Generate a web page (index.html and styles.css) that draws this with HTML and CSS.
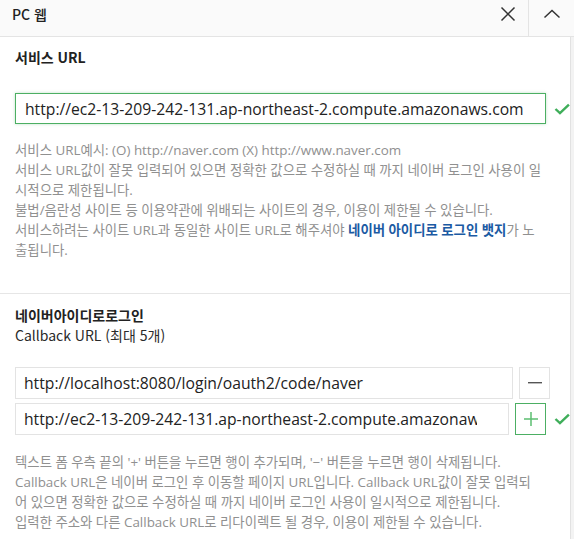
FILE: index.html
```html
<!DOCTYPE html>
<html lang="ko">
<head>
<meta charset="utf-8">
<link rel="stylesheet" href="styles.css">
</head>
<body>
<div class="header">
  <div class="title">PC 웹</div>
  <div class="hbtn close">
    <svg width="16" height="16" viewBox="0 0 16 16"><path d="M1.5 1.5 L14.5 14.5 M14.5 1.5 L1.5 14.5" stroke="#333" stroke-width="1.5" fill="none"/></svg>
  </div>
  <div class="hbtn fold">
    <svg width="18" height="10" viewBox="0 0 18 10"><path d="M1.5 8.5 L9 1.5 L16.5 8.5" stroke="#333" stroke-width="1.5" fill="none"/></svg>
  </div>
</div>
<div class="main">
  <div class="content">
    <section class="sec sec1">
      <h3 class="sec-title">서비스 URL</h3>
      <div class="row first">
        <input class="field active wide" type="text" readonly value="http://ec2-13-209-242-131.ap-northeast-2.compute.amazonaws.com">
        <svg class="check" width="16" height="12" viewBox="0 0 16 12"><path d="M1.5 6 L6 10.2 L15 1.5" stroke="#3fae5a" stroke-width="2.4" fill="none"/></svg>
      </div>
      <p class="help">서비스 URL예시: (O) http://naver.com (X) http://www.naver.com<br>서비스 URL값이 잘못 입력되어 있으면 정확한 값으로 수정하실 때 까지 네이버 로그인 사용이 일시적으로 제한됩니다.<br>불법/음란성 사이트 등 이용약관에 위배되는 사이트의 경우, 이용이 제한될 수 있습니다.<br>서비스하려는 사이트 URL과 동일한 사이트 URL로 해주셔야 <b class="link">네이버 아이디로 로그인 뱃지</b>가 노출됩니다.</p>
    </section>
    <section class="sec sec2">
      <h3 class="sec-title two"><span class="strong">네이버아이디로로그인</span><br>Callback URL (최대 5개)</h3>
      <div class="rows">
        <div class="row">
          <input class="field" type="text" readonly value="http://localhost:8080/login/oauth2/code/naver">
          <div class="btn">
            <svg width="14" height="2" viewBox="0 0 14 2"><rect width="14" height="1.4" fill="#555"/></svg>
          </div>
        </div>
        <div class="row">
          <input class="field" type="text" readonly value="http://ec2-13-209-242-131.ap-northeast-2.compute.amazonaws.com">
          <div class="btn green">
            <svg width="14" height="14" viewBox="0 0 14 14"><path d="M7 0 V14 M0 7 H14" stroke="#5cbf72" stroke-width="1.5"/></svg>
          </div>
          <svg class="check" width="16" height="12" viewBox="0 0 16 12"><path d="M1.5 6 L6 10.2 L15 1.5" stroke="#3fae5a" stroke-width="2.4" fill="none"/></svg>
        </div>
      </div>
      <p class="help h2">텍스트 폼 우측 끝의 '+' 버튼을 누르면 행이 추가되며, '−' 버튼을 누르면 행이 삭제됩니다.<br>Callback URL은 네이버 로그인 후 이동할 페이지 URL입니다. Callback URL값이 잘못 입력되어 있으면 정확한 값으로 수정하실 때 까지 네이버 로그인 사용이 일시적으로 제한됩니다.<br>입력한 주소와 다른 Callback URL로 리다이렉트 될 경우, 이용이 제한될 수 있습니다.</p>
    </section>
  </div>
  <div class="strip"></div>
</div>
</body>
</html>
```
FILE: styles.css
```css
* { box-sizing: border-box; }
html, body { margin: 0; padding: 0; background: #fff; }
body {
  width: 574px;
  height: 539px;
  overflow: hidden;
  font-family: "Noto Sans CJK KR", "Noto Sans", sans-serif;
  color: #222;
}
.header {
  height: 37px;
  background: #fafafa;
  border-bottom: 1px solid #e4e4e4;
  display: flex;
  align-items: stretch;
}
.title {
  flex: 1;
  padding: 4px 0 0 12px;
  font-size: 14px;
  line-height: 20px;
  font-weight: 500;
  color: #222;
}
.hbtn {
  display: flex;
  justify-content: center;
  align-items: flex-start;
}
.close { width: 42px; padding-top: 6px; border-right: 1px solid #e4e4e4; }
.fold { width: 45px; padding-top: 9px; }
.main { display: flex; }
.content { width: 570px; }
.strip { width: 4px; background: #f3f3f3; border-left: 1px solid #e2e2e2; height: 502px; }
.sec { padding-left: 15px; }
.sec1 { padding-top: 10px; border-bottom: 1px solid #e6e6e6; padding-bottom: 33px; }
.sec-title {
  margin: 0;
  font-size: 14px;
  line-height: 20px;
  font-weight: 700;
  color: #222;
}
.row { display: flex; align-items: center; }
.first { margin-top: 26px; }
.field {
  display: block;
  margin: 0;
  width: 498px;
  height: 32px;
  border: 1px solid #e3e3e3;
  border-radius: 0;
  outline: none;
  background: #fff;
  padding: 0 31px 0 8px;
  font-family: "Open Sans", "Noto Sans CJK KR", sans-serif;
  font-size: 15.7px;
  line-height: 30px;
  color: #222;
}
.field.wide { width: 534px; height: 31px; line-height: 29px; padding: 0 8px 0 9px; }
.field.active { border-color: #4caf63; box-shadow: 0 0 3px rgba(76,175,99,0.35); }
.check { margin-left: 8px; }
.btn {
  width: 31px;
  height: 32px;
  margin-left: 6px;
  border: 1px solid #e3e3e3;
  display: flex;
  align-items: center;
  justify-content: center;
}
.btn.green { border-color: #4caf63; }
.help {
  margin: 16px 0 0;
  font-family: "Open Sans", "Noto Sans CJK KR", sans-serif;
  font-size: 13.4px;
  line-height: 20px;
  color: #909090;
  width: 528px;
  word-break: normal;
}
.link { color: #1b5aa3; font-weight: 700; }
.sec2 { padding-top: 11px; }
.sec-title.two { font-weight: 400; color: #2a2a2a; }
.strong { font-weight: 700; color: #222; }
.rows { margin-top: 22px; display: flex; flex-direction: column; gap: 4px; }
.help.h2 { margin-top: 17px; }
```
